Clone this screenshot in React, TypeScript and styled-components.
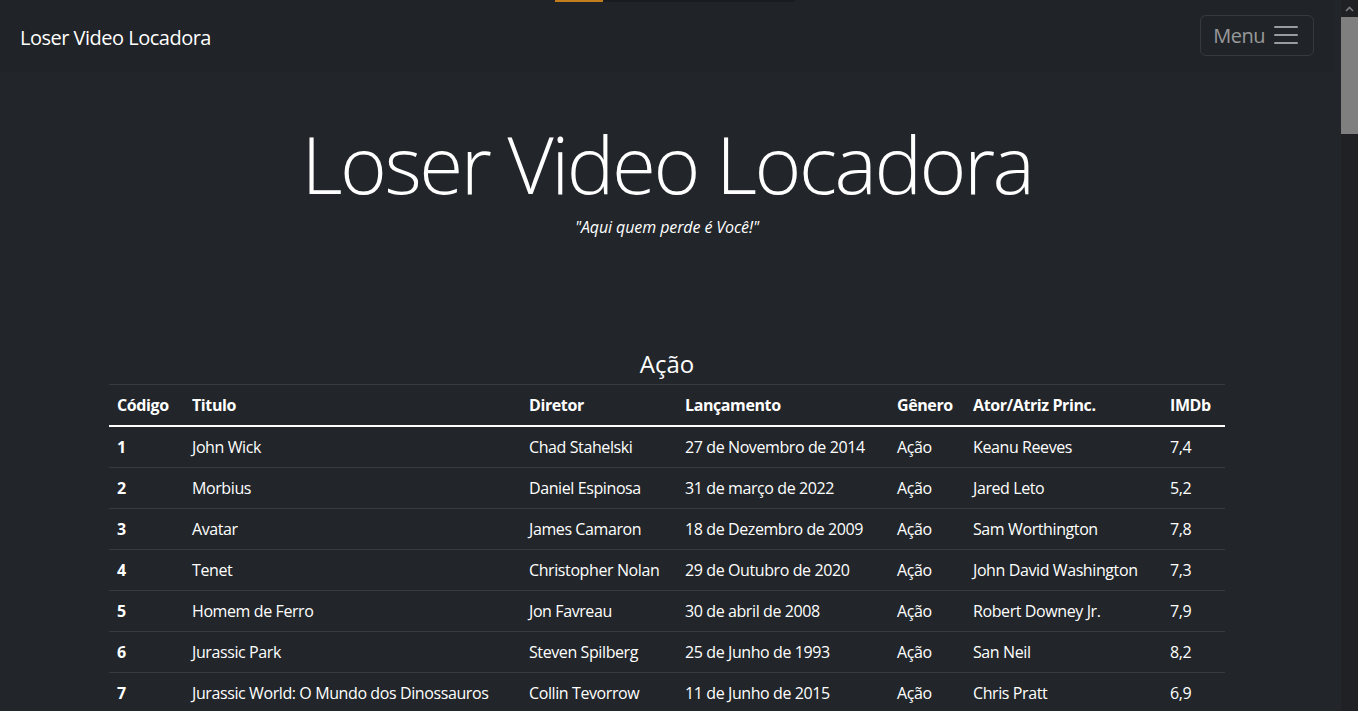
import React from 'react'
import styled, { createGlobalStyle } from 'styled-components'

interface IMovie {
  code: number
  title: string
  director: string
  release: string
  genre: string
  actor: string
  imdb: string
}

const movies: IMovie[] = [
  { code: 1, title: 'John Wick', director: 'Chad Stahelski', release: '27 de Novembro de 2014', genre: 'Ação', actor: 'Keanu Reeves', imdb: '7,4' },
  { code: 2, title: 'Morbius', director: 'Daniel Espinosa', release: '31 de março de 2022', genre: 'Ação', actor: 'Jared Leto', imdb: '5,2' },
  { code: 3, title: 'Avatar', director: 'James Camaron', release: '18 de Dezembro de 2009', genre: 'Ação', actor: 'Sam Worthington', imdb: '7,8' },
  { code: 4, title: 'Tenet', director: 'Christopher Nolan', release: '29 de Outubro de 2020', genre: 'Ação', actor: 'John David Washington', imdb: '7,3' },
  { code: 5, title: 'Homem de Ferro', director: 'Jon Favreau', release: '30 de abril de 2008', genre: 'Ação', actor: 'Robert Downey Jr.', imdb: '7,9' },
  { code: 6, title: 'Jurassic Park', director: 'Steven Spilberg', release: '25 de Junho de 1993', genre: 'Ação', actor: 'San Neil', imdb: '8,2' },
  { code: 7, title: 'Jurassic World: O Mundo dos Dinossauros', director: 'Collin Tevorrow', release: '11 de Junho de 2015', genre: 'Ação', actor: 'Chris Pratt', imdb: '6,9' },
]

const columns = [
  { label: 'Código', width: 75 },
  { label: 'Titulo', width: 337 },
  { label: 'Diretor', width: 156 },
  { label: 'Lançamento', width: 212 },
  { label: 'Gênero', width: 76 },
  { label: 'Ator/Atriz Princ.', width: 197 },
  { label: 'IMDb', width: 63 },
]

const App: React.FC = () => {
  return (
    <Shell>
      <GlobalStyle />
      <Page>
        <LoadingTrack>
          <LoadingFill />
        </LoadingTrack>
        <Navbar>
          <Brand>Loser Video Locadora</Brand>
          <Toggler type="button">
            Menu
            <TogglerIcon viewBox="0 0 30 30">
              <path d="M4 7h22M4 15h22M4 23h22" />
            </TogglerIcon>
          </Toggler>
        </Navbar>
        <Hero>
          <Title>Loser Video Locadora</Title>
          <Slogan>"Aqui quem perde é Você!"</Slogan>
        </Hero>
        <Section>
          <Table>
            <Caption>Ação</Caption>
            <colgroup>
              {columns.map((c) => (
                <col key={c.label} style={{ width: c.width }} />
              ))}
            </colgroup>
            <thead>
              <tr>
                {columns.map((c) => (
                  <HeadCell key={c.label}>{c.label}</HeadCell>
                ))}
              </tr>
            </thead>
            <Body>
              {movies.map((m) => (
                <tr key={m.code}>
                  <CodeCell>{m.code}</CodeCell>
                  <Cell>{m.title}</Cell>
                  <Cell>{m.director}</Cell>
                  <Cell>{m.release}</Cell>
                  <Cell>{m.genre}</Cell>
                  <Cell>{m.actor}</Cell>
                  <Cell>{m.imdb}</Cell>
                </tr>
              ))}
            </Body>
          </Table>
        </Section>
      </Page>
      <ScrollTrack>
        <ScrollArrow>
          <svg width="9" height="6" viewBox="0 0 9 6">
            <path d="M1 5l3.5-3.5L8 5" fill="none" stroke="#7b7d80" strokeWidth="1.6" />
          </svg>
        </ScrollArrow>
        <ScrollThumb />
      </ScrollTrack>
    </Shell>
  )
}

export default App

const GlobalStyle = createGlobalStyle`
  html, body {
    margin: 0;
    padding: 0;
    background: #22262a;
    overflow: hidden;
  }
  body {
    font-family: "Open Sans", "Noto Sans", sans-serif;
    color: #dee2e6;
  }
`
const Shell = styled.div`
  display: flex;
  height: 711px;
  overflow: hidden;
`
const Page = styled.div`
  position: relative;
  flex: 1;
  padding-right: 7px;
  overflow: hidden;
`
const LoadingTrack = styled.div`
  position: absolute;
  top: 0;
  left: 555px;
  width: 240px;
  height: 2px;
  background: #1a1c1f;
`
const LoadingFill = styled.div`
  width: 48px;
  height: 2px;
  background: #c47d1c;
`
const Navbar = styled.nav`
  height: 72px;
  display: flex;
  align-items: center;
  justify-content: space-between;
  padding: 0 20px;
  background: #202327;
`
const Brand = styled.a`
  font-size: 20px;
  letter-spacing: -0.5px;
  color: #fff;
  padding-top: 3px;
`
const Toggler = styled.button`
  display: flex;
  align-items: center;
  gap: 6px;
  height: 41px;
  padding: 0 12px;
  margin-top: -2px;
  background: transparent;
  border: 1px solid rgba(255, 255, 255, 0.1);
  border-radius: 6px;
  font-family: inherit;
  font-size: 20px;
  letter-spacing: -0.5px;
  color: rgba(255, 255, 255, 0.55);
`
const TogglerIcon = styled.svg`
  width: 30px;
  height: 30px;
  fill: none;
  stroke: rgba(255, 255, 255, 0.55);
  stroke-width: 2;
  stroke-linecap: round;
`
const Hero = styled.header`
  text-align: center;
  padding-top: 43px;
`
const Title = styled.h1`
  margin: 0;
  font-size: 80px;
  font-weight: 300;
  line-height: 1.2;
  letter-spacing: -2.5px;
  color: #fff;
`
const Slogan = styled.p`
  margin: 5px 0 0;
  font-size: 16px;
  font-style: italic;
  letter-spacing: -0.1px;
  color: #fff;
`
const Section = styled.section`
  width: 1116px;
  margin: 111px auto 0;
`
const Table = styled.table`
  width: 100%;
  table-layout: fixed;
  border-collapse: collapse;
  color: #fff;
  font-size: 16px;
  line-height: 24px;
  letter-spacing: -0.4px;
`
const Caption = styled.caption`
  caption-side: top;
  padding: 0 0 6px;
  font-size: 24px;
  line-height: 29px;
  letter-spacing: 0;
  color: #fff;
  text-align: center;
`
const HeadCell = styled.th`
  padding: 8px;
  text-align: left;
  font-weight: 700;
  border-top: 1px solid #373b3e;
  white-space: nowrap;
`
const Body = styled.tbody`
  border-top: 2px solid #fff;
`
const Cell = styled.td`
  padding: 8px;
  border-bottom: 1px solid #373b3e;
  white-space: nowrap;
`
const CodeCell = styled(Cell)`
  font-weight: 700;
`
const ScrollTrack = styled.div`
  width: 17px;
  flex-shrink: 0;
  background: #1f2125;
  display: flex;
  flex-direction: column;
`
const ScrollArrow = styled.div`
  height: 17px;
  display: flex;
  align-items: center;
  justify-content: center;
`
const ScrollThumb = styled.div`
  height: 117px;
  background: #7f7f80;
`
